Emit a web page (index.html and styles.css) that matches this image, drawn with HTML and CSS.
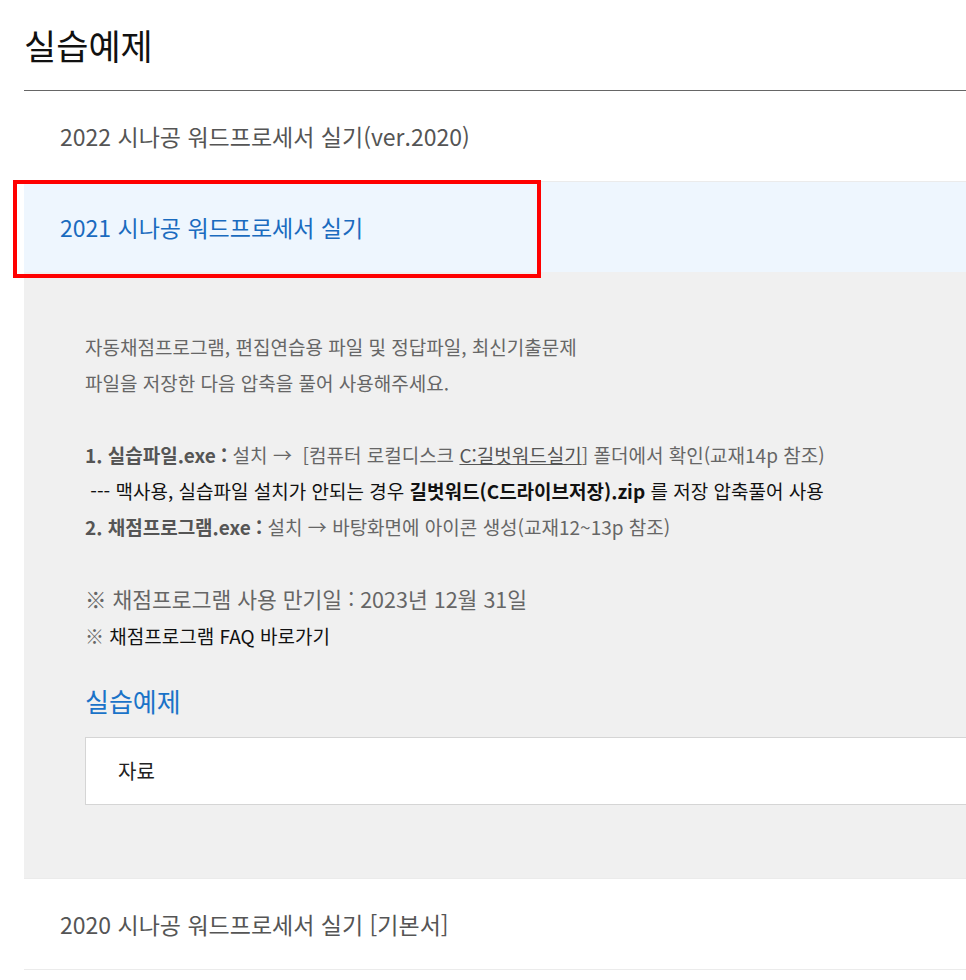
FILE: index.html
```html
<!DOCTYPE html>
<html lang="ko">
<head>
  <meta charset="UTF-8">
  <meta name="viewport" content="width=device-width, initial-scale=1.0">
  <title>실습예제</title>
  <link rel="stylesheet" href="styles.css">
</head>
<body>
  <div class="wrap">
    <h2 class="page-title">실습예제</h2>

    <ul class="acc-list">
      <li class="acc-item">
        <a class="acc-head" href="#">2022 시나공 워드프로세서 실기(ver.2020)</a>
      </li>
      <li class="acc-item open">
        <a class="acc-head" href="#">2021 시나공 워드프로세서 실기</a>
        <div class="acc-body">
          <p class="desc">
            자동채점프로그램, 편집연습용 파일 및 정답파일, 최신기출문제<br>
            파일을 저장한 다음 압축을 풀어 사용해주세요.<br>
            <br>
            <b>1. 실습파일.exe :</b> 설치 &rarr; &nbsp;[컴퓨터 로컬디스크 <u>C:길벗워드실기</u>] 폴더에서 확인(교재14p 참조)<br>
            <span class="dark">&nbsp;--- 맥사용, 실습파일 설치가 안되는 경우 <b>길벗워드(C드라이브저장).zip</b> 를 저장 압축풀어 사용</span><br>
            <b>2. 채점프로그램.exe :</b> 설치 &rarr; 바탕화면에 아이콘 생성(교재12~13p 참조)<br>
            <br>
            <span class="big">※ 채점프로그램 사용 만기일 : 2023년 12월 31일</span><br>
            ※ <a class="dark" href="#">채점프로그램 FAQ 바로가기</a>
          </p>

          <h3 class="sub-title">실습예제</h3>
          <div class="file-box">자료</div>
        </div>
      </li>
      <li class="acc-item">
        <a class="acc-head" href="#">2020 시나공 워드프로세서 실기 [기본서]</a>
      </li>
    </ul>
  </div>

  <!-- highlight marker over the open item -->
  <div class="marker"></div>
</body>
</html>
```

FILE: styles.css
```css
body {
  margin: 0;
  padding: 0;
  background-color: #fff;
  color: #666;
  font-family: "Noto Sans CJK KR", "Noto Sans", sans-serif;
  overflow-x: hidden;
}

.wrap {
  padding-left: 24px;
}

.page-title {
  margin: 0;
  height: 90px;
  line-height: 90px;
  font-size: 35px;
  font-weight: 400;
  color: #111;
}

.acc-list {
  list-style: none;
  margin: 0;
  padding: 0;
  border-top: 1px solid #666;
}

.acc-item {
  border-bottom: 1px solid #ebebeb;
}

.acc-head {
  display: block;
  height: 90px;
  line-height: 90px;
  padding-left: 36px;
  font-size: 23px;
  color: #555;
  text-decoration: none;
}

.acc-item.open .acc-head {
  background-color: #eef6fe;
  color: #1a6bbf;
}

.acc-body {
  background-color: #f0f0f0;
  padding: 57px 0 73px 61px;
}

.desc {
  margin: 0;
  font-size: 19px;
  line-height: 36px;
  color: #666;
  white-space: nowrap;
}

.desc b {
  color: #555;
}

.desc u {
  color: #555;
}

.desc .dark,
.desc .dark b {
  color: #111;
  text-decoration: none;
}

.desc .big {
  font-size: 21.5px;
}

.sub-title {
  margin: 30px 0 0;
  font-size: 26px;
  line-height: 34px;
  font-weight: 400;
  color: #1a73c8;
}

.file-box {
  margin: 19px -2px 0 0;
  height: 66px;
  line-height: 66px;
  padding-left: 32px;
  background-color: #fff;
  border: 1px solid #d5d5d5;
  font-size: 20px;
  color: #222;
}

.marker {
  position: absolute;
  top: 180px;
  left: 13px;
  width: 520px;
  height: 90px;
  border: 4px solid #ff0000;
}
```
